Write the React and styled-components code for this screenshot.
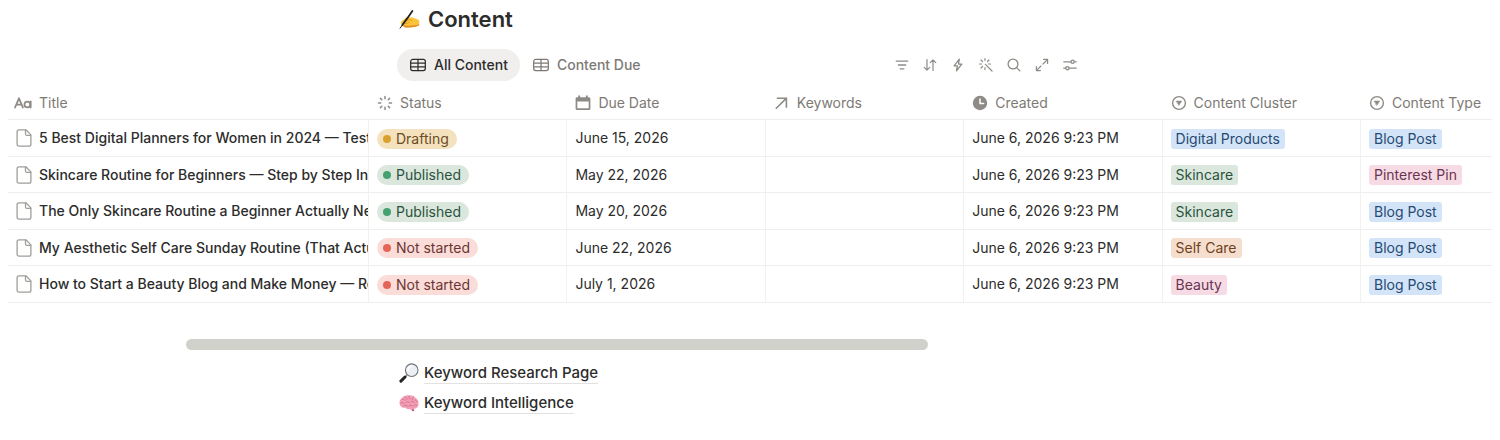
import React, { useState } from 'react';
import styled, { createGlobalStyle } from 'styled-components';

const GlobalStyle = createGlobalStyle`
  * {
    box-sizing: border-box;
  }

  body {
    margin: 0;
    background: #ffffff;
    color: #2c2c2b;
    font-family: Inter, "Liberation Sans", sans-serif;
    font-size: 14px;
    line-height: 20px;
  }
`;

const Page = styled.main`
  padding: 3px 0 24px;
`;

const Center = styled.div`
  padding-right: 19px;
`;

const Column = styled.div`
  max-width: 687px;
  margin: 0 auto;
`;

const Heading = styled.h1`
  display: flex;
  align-items: center;
  gap: 8px;
  margin: 0 0 14px 2px;
  font-size: 22px;
  font-weight: 600;
  line-height: 32px;
`;

const Toolbar = styled.div`
  display: flex;
  align-items: center;
  justify-content: space-between;
`;

const Group = styled.div`
  display: flex;
  align-items: center;
`;

const Tab = styled.button`
  display: flex;
  align-items: center;
  gap: 7px;
  height: 32px;
  padding: 0 12px;
  border: 0;
  border-radius: 16px;
  background: ${props => (props.$active ? '#f0efed' : 'transparent')};
  color: ${props => (props.$active ? '#2c2c2b' : '#7d7a75')};
  font: inherit;
  font-weight: 500;
  cursor: pointer;
`;

const ToolButton = styled.button`
  display: flex;
  align-items: center;
  justify-content: center;
  width: 28px;
  height: 28px;
  padding: 0;
  border: 0;
  background: transparent;
  color: #8e8b86;
  cursor: pointer;
`;

const TableWrap = styled.div`
  margin: 0 8px;
  padding-top: 5px;
  overflow: hidden;
`;

const Table = styled.table`
  width: 100%;
  min-width: 1200px;
  table-layout: fixed;
  border-collapse: separate;
  border-spacing: 0;
`;

const TitleCol = styled.col`
  width: 361px;
`;

const TypeCol = styled.col`
  width: 131px;
`;

const HeadCell = styled.th`
  height: 34px;
  padding: 0 8px;
  border-bottom: 1px solid #eeeeec;
  color: #7d7a75;
  font-weight: 400;
  text-align: left;
  white-space: nowrap;

  &:first-child {
    padding-left: 6px;
  }
`;

const HeadLabel = styled.span`
  display: flex;
  align-items: center;
  gap: 7px;

  svg {
    color: #8e8b86;
  }
`;

const Row = styled.tr`
  height: 36px;

  &:nth-child(odd) {
    height: 37px;
  }
`;

const Cell = styled.td`
  padding: 0 8px;
  border-right: 1px solid #f1f1ef;
  border-bottom: 1px solid #eeeeec;
  white-space: nowrap;
  overflow: hidden;

  &:first-child {
    padding: 0 0 0 7px;
  }

  &:last-child {
    border-right: 0;
  }
`;

const TitleLine = styled.div`
  display: flex;
  align-items: center;
  gap: 6px;
  overflow: hidden;
  font-weight: 500;
`;

const Status = styled.span`
  display: inline-flex;
  align-items: center;
  gap: 5px;
  height: 20px;
  padding: 0 8px 0 6px;
  border-radius: 10px;
  background: ${props => props.$tone.bg};
  color: ${props => props.$tone.text};
  vertical-align: middle;

  &::before {
    content: '';
    width: 8px;
    height: 8px;
    border-radius: 50%;
    background: ${props => props.$tone.dot};
  }
`;

const Tag = styled.span`
  display: inline-block;
  height: 20px;
  padding: 0 5px;
  border-radius: 3px;
  background: ${props => props.$tone.bg};
  color: ${props => props.$tone.text};
  vertical-align: middle;
`;

const Scrollbar = styled.div`
  margin: 36px 8px 8px;
`;

const Thumb = styled.div`
  width: 50%;
  height: 11px;
  margin-left: 12%;
  border-radius: 6px;
  background: #d1d1cb;
`;

const PageLink = styled.a`
  display: flex;
  align-items: center;
  gap: 5px;
  height: 30px;
  padding-left: 2px;
  color: inherit;
  font-size: 15px;
  font-weight: 500;
  text-decoration: none;
`;

const LinkText = styled.span`
  border-bottom: 1px solid #e3e2e0;
`;

const Svg = ({ size = 16, children, ...rest }) => (
    <svg
        width={size}
        height={size}
        viewBox="0 0 16 16"
        fill="none"
        stroke="currentColor"
        strokeWidth="1.3"
        strokeLinecap="round"
        strokeLinejoin="round"
        aria-hidden="true"
        style={{ flex: 'none' }}
        {...rest}
    >
        {children}
    </svg>
);

const TableIcon = () => (
    <Svg size={18} strokeWidth="1.1">
        <rect x="1.5" y="3.1" width="13" height="9.8" rx="1.8" />
        <path d="M1.5 6.3h13M1.5 9.6h13M8 3.1v9.8" />
    </Svg>
);

const FilterIcon = () => (
    <Svg><path d="M2.3 4.2h11.4M4.3 8h7.4M6.2 11.8h3.6" /></Svg>
);

const SortIcon = () => (
    <Svg strokeWidth="1.2">
        <path d="M5 2.6v10.4M2.2 10.4L5 13.2l2.8-2.800M11 13.400V3M8.200 5.600L11 2.800l2.800 2.800" />
    </Svg>
);

const BoltIcon = () => (
    <Svg><path d="M9.3 2.2L4.1 8.8h3.3l-.9 5 5.3-6.7H8.5z" /></Svg>
);

const WandIcon = () => (
    <Svg strokeWidth="1.2">
        <path d="M7.400 7.400l6.600 6.600M7 1.500v2M7 10.500v2M1.500 7h2M10.500 7h2M3 3l1.500 1.500M11 3L9.500 4.500M3 11l1.500-1.500" />
    </Svg>
);

const SearchIcon = () => (
    <Svg><circle cx="7" cy="7" r="4.9" /><path d="M10.6 10.6l3.3 3.3" /></Svg>
);

const ExpandIcon = () => (
    <Svg strokeWidth="1.2">
        <path d="M9.600 2.400h4v4M13.400 2.600L9 7M6.400 13.600h-4v-4M2.600 13.400L7 9" />
    </Svg>
);

const SettingsIcon = () => (
    <Svg>
        <path d="M1.8 4.8h7M12.4 4.8h1.8M1.8 11.2h2M7.4 11.2h6.8" />
        <circle cx="10.6" cy="4.8" r="1.6" />
        <circle cx="5.4" cy="11.2" r="1.6" />
    </Svg>
);

const TextTypeIcon = () => (
    <Svg size={18} strokeWidth="1.6">
        <path d="M.9 12L4.400 3.800 7.900 12M2.100 9.400h4.600" />
        <circle cx="11.900" cy="9.300" r="2.600" />
        <path d="M14.800 6.600V12" />
    </Svg>
);

const StatusIcon = () => (
    <Svg strokeWidth="1.5">
        <path d="M8 1.5v2.2M8 12.3v2.2M1.5 8h2.2M12.3 8h2.2M3.4 3.4l1.400 1.400M11.200 11.200l1.400 1.400M3.400 12.600l1.400-1.400M11.200 4.800l1.400-1.400" />
    </Svg>
);

const DateIcon = () => (
    <Svg>
        <path
            d="M2.200 2.200h1V.6h1.900v1.600h5.800V.6h1.900v1.600h1c1 0 1.600.6 1.600 1.600v9.600c0 1-.6 1.600-1.600 1.600H2.200c-1 0-1.600-.6-1.600-1.600V3.800c0-1 .6-1.600 1.600-1.600zM2.300 6.400v6.900h11.400V6.400z"
            fill="currentColor"
            fillRule="evenodd"
            stroke="none"
        />
    </Svg>
);

const RelationIcon = () => (
    <Svg strokeWidth="1.6" strokeLinecap="butt" strokeLinejoin="miter">
        <path d="M2.800 3.200h9.600v9.600M12.200 3.400L1.800 13.800" />
    </Svg>
);

const ClockIcon = () => (
    <Svg>
        <circle cx="8" cy="8" r="7.2" fill="currentColor" stroke="none" />
        <path d="M8 4v4.400h3.600" stroke="#ffffff" strokeWidth="1.500" />
    </Svg>
);

const SelectIcon = () => (
    <Svg strokeWidth="1.4">
        <circle cx="8" cy="8" r="6.4" />
        <path d="M5.4 6.100h5.200L8 10.200z" fill="currentColor" strokeWidth=".6" />
    </Svg>
);

const PageIcon = () => (
    <Svg size={18} viewBox="0 0 18 18" stroke="#a09e9a">
        <path d="M4 .8h6.900l5 5.100v9.400c0 1.100-.8 1.900-1.900 1.900H4c-1.100 0-1.900-.8-1.900-1.900V2.700C2.100 1.600 2.900.8 4 .8z" />
        <path d="M10.500 1.200v3.700c0 1 .5 1.500 1.500 1.500h3.600" />
    </Svg>
);

const WritingHand = () => (
    <svg width="21" height="21" viewBox="0 0 21 21" role="img" aria-label="Writing hand">
        <path d="M2.6 12.2L7.4 8.200l6 .2 5.400 2c1.100.5 1.600 1.300 1.500 2.600l-.3 3.400c-3.600 1.800-8.500 2.400-13.800 2-1.700-.1-2.500-1.100-2.100-2.100l-2-1.800c-.6-.7-.4-1.800.5-2.300z" fill="#fcc438" />
        <path d="M4.600 16.300c3.700.6 10 .6 15.500-1l-.2 1.300c-3.600 1.600-8.500 2.100-13.600 1.800-1.400-.1-2.100-1.100-1.700-2.100z" fill="#e0902a" />
        <path d="M5.400 12.400l4.400-1.600 3 .5M5.200 14.900l4.800-1.200" stroke="#dc9020" strokeWidth=".8" fill="none" strokeLinecap="round" />
        <path d="M13.400 2L8.200 9.400l-4.900 6.600" stroke="#222222" strokeWidth="1.800" strokeLinecap="round" />
        <path d="M3.200 16.200L1.100 19.200" stroke="#222222" strokeWidth="1" strokeLinecap="round" />
    </svg>
);

const Magnifier = () => (
    <svg width="20" height="20" viewBox="0 0 20 20" role="img" aria-label="Magnifying glass">
        <path d="M8.3 11.7L5.6 14.4" stroke="#9a9a9a" strokeWidth="1.8" />
        <path d="M6 14L1.900 18.100" stroke="#252525" strokeWidth="3" strokeLinecap="round" />
        <circle cx="12.700" cy="7.200" r="6.300" fill="#eceff3" stroke="#73777b" strokeWidth="1.100" />
        <path d="M9 7.200a3.800 3.800 0 0 1 3.400-3.700" stroke="#ffffff" strokeWidth="1.400" fill="none" strokeLinecap="round" />
    </svg>
);

const Brain = () => (
    <svg width="20" height="20" viewBox="0 0 20 20" role="img" aria-label="Brain">
        <path d="M11.500 15.200l2.800-.4 1 2.800c-.5 1-1.700.9-2.200.2z" fill="#c9597c" />
        <path d="M1 12.300C-.1 9.500.6 6.500 3 5 4.600 3 7 2.200 9.300 2.400c2.600-.4 5.400.4 7 2.300 2.400 1.400 3.500 4 3.200 6.600-.1 2.300-1.700 4.200-4 4.400-1.700 1.100-3.600 1-5 .2-1.700.5-3.200 0-4-1.100C4.200 15 1.900 14.200 1 12.300z" fill="#f29db4" />
        <path d="M3 6.400c1.400-.6 2.500 0 3 .9M6 4.100c1.500.3 2 1.300 1.800 2.300M10.200 3.200c-.8 1.300-.2 2.400 1 2.700M14.300 4.300c-1.100.5-1.400 1.500-.9 2.400M1.700 10c1.500-.8 2.900-.3 3.400.9M7 9.400c1.500-1 3.200-.5 3.900.6M12.200 8.600c1.500-.7 2.700 0 3 1M16.300 6.800c.2 1.200 1 1.700 2.100 1.600M4.900 12.900c1.300-.8 2.900-.6 3.700.4M9.900 12.800c1.500-.8 3.300-.5 4.300.4M15.600 12.200c.9-.6 1.900-.5 2.500.1" stroke="#d06c8e" strokeWidth=".8" fill="none" strokeLinecap="round" />
    </svg>
);

const tones = {
    yellow: { bg: '#f4e2bf', text: '#6b4d1e', dot: '#d9a02b' },
    green: { bg: '#dbe7dd', text: '#2a533c', dot: '#46a171' },
    red: { bg: '#fadcd9', text: '#6d3531', dot: '#e56458' },
    blue: { bg: '#d3e4f8', text: '#264a72' },
    pink: { bg: '#f7dbe4', text: '#6a3450' },
    orange: { bg: '#f6dece', text: '#6c421d' },
};

const statusTones = { Drafting: 'yellow', Published: 'green', 'Not started': 'red' };

const tagTones = {
    'Digital Products': 'blue',
    Skincare: 'green',
    'Self Care': 'orange',
    Beauty: 'pink',
    'Blog Post': 'blue',
    'Pinterest Pin': 'pink',
};

const columns = [
    { name: 'Title', Icon: TextTypeIcon },
    { name: 'Status', Icon: StatusIcon },
    { name: 'Due Date', Icon: DateIcon },
    { name: 'Keywords', Icon: RelationIcon },
    { name: 'Created', Icon: ClockIcon },
    { name: 'Content Cluster', Icon: SelectIcon },
    { name: 'Content Type', Icon: SelectIcon },
];

const rows = [
    { title: '5 Best Digital Planners for Women in 2024 — Tested', status: 'Drafting', due: 'June 15, 2026', cluster: 'Digital Products', type: 'Blog Post' },
    { title: 'Skincare Routine for Beginners — Step by Step Info', status: 'Published', due: 'May 22, 2026', cluster: 'Skincare', type: 'Pinterest Pin' },
    { title: 'The Only Skincare Routine a Beginner Actually Needs', status: 'Published', due: 'May 20, 2026', cluster: 'Skincare', type: 'Blog Post' },
    { title: 'My Aesthetic Self Care Sunday Routine (That Actually', status: 'Not started', due: 'June 22, 2026', cluster: 'Self Care', type: 'Blog Post' },
    { title: 'How to Start a Beauty Blog and Make Money — Real', status: 'Not started', due: 'July 1, 2026', cluster: 'Beauty', type: 'Blog Post' },
];

const tools = [
    { name: 'Filter', Icon: FilterIcon },
    { name: 'Sort', Icon: SortIcon },
    { name: 'Automations', Icon: BoltIcon },
    { name: 'Autofill', Icon: WandIcon },
    { name: 'Search', Icon: SearchIcon },
    { name: 'Expand', Icon: ExpandIcon },
    { name: 'Settings', Icon: SettingsIcon },
];

const views = ['All Content', 'Content Due'];

const App = () => {
    const [view, setView] = useState(views[0]);

    return (
        <Page>
            <GlobalStyle />
            <Center>
                <Column>
                    <Heading><WritingHand />Content</Heading>
                    <Toolbar>
                        <Group>
                            {views.map(name => (
                                <Tab key={name} type="button" $active={name === view} onClick={() => setView(name)}>
                                    <TableIcon />
                                    {name}
                                </Tab>
                            ))}
                        </Group>
                        <Group>
                            {tools.map(({ name, Icon }) => (
                                <ToolButton key={name} type="button" aria-label={name}><Icon /></ToolButton>
                            ))}
                        </Group>
                    </Toolbar>
                </Column>
            </Center>

            <TableWrap>
                <Table>
                    <colgroup>
                        <TitleCol />
                        <col span="5" />
                        <TypeCol />
                    </colgroup>
                    <thead>
                        <tr>
                            {columns.map(({ name, Icon }) => (
                                <HeadCell key={name} scope="col">
                                    <HeadLabel><Icon />{name}</HeadLabel>
                                </HeadCell>
                            ))}
                        </tr>
                    </thead>
                    <tbody>
                        {rows.map(row => (
                            <Row key={row.title}>
                                <Cell><TitleLine><PageIcon />{row.title}</TitleLine></Cell>
                                <Cell><Status $tone={tones[statusTones[row.status]]}>{row.status}</Status></Cell>
                                <Cell>{row.due}</Cell>
                                <Cell />
                                <Cell>June 6, 2026 9:23 PM</Cell>
                                <Cell><Tag $tone={tones[tagTones[row.cluster]]}>{row.cluster}</Tag></Cell>
                                <Cell><Tag $tone={tones[tagTones[row.type]]}>{row.type}</Tag></Cell>
                            </Row>
                        ))}
                    </tbody>
                </Table>
            </TableWrap>

            <Scrollbar><Thumb /></Scrollbar>

            <Center>
                <Column>
                    <PageLink href="#research"><Magnifier /><LinkText>Keyword Research Page</LinkText></PageLink>
                    <PageLink href="#intelligence"><Brain /><LinkText>Keyword Intelligence</LinkText></PageLink>
                </Column>
            </Center>
        </Page>
    );
};

export default App;
